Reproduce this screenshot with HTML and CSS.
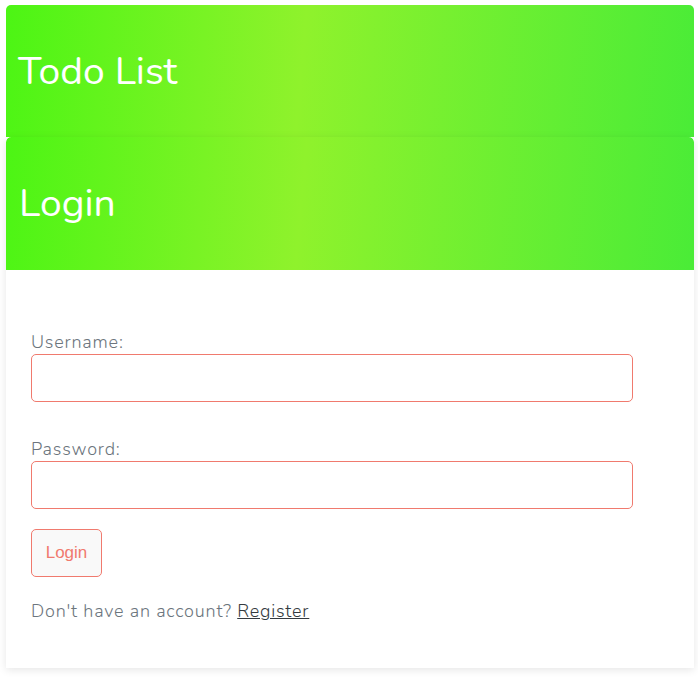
FILE: index.html
```html
<!DOCTYPE html>
<html>
<head>
<meta charset="utf-8">
<link rel="stylesheet" href="styles.css">
</head>
<body>
<div class="page">
  <header class="banner">
    <h1 class="banner-title">Todo List</h1>
  </header>
  <section class="card">
    <div class="card-header">
      <h2 class="card-title">Login</h2>
    </div>
    <div class="card-body">
      <form class="form">
        <label class="label" for="u">Username:</label>
        <input class="input" id="u" type="text">
        <label class="label label-2" for="p">Password:</label>
        <input class="input" id="p" type="password">
        <button class="btn" type="button">Login</button>
        <p class="note">Don't have an account? <a class="link" href="#">Register</a></p>
      </form>
    </div>
  </section>
</div>
</body>
</html>
```

FILE: styles.css
```css
html, body {
  margin: 0;
  padding: 0;
  background: #ffffff;
}
body {
  font-family: "Nunito", "Lato", "Open Sans", sans-serif;
}
.page {
  padding: 5px 4px 0 6px;
}
.banner, .card-header {
  background: linear-gradient(95deg, #4cf514 0%, #8ff22c 43%, #4aec37 100%);
  color: #ffffff;
  height: 132px;
  display: flex;
  align-items: center;
  padding: 0 12px;
  box-sizing: border-box;
}
.banner {
  border-radius: 5px 5px 0 0;
}
.banner-title, .card-title {
  margin: 0;
  font-weight: 400;
  font-size: 39px;
  line-height: 1;
}
.card {
  border-radius: 5px 5px 0 0;
  overflow: hidden;
  background: #fff;
  box-shadow: 0 2px 8px rgba(0,0,0,0.1);
  margin-bottom: 9px;
}
.card-header {
  height: 133px;
  border-radius: 5px 5px 0 0;
  padding-left: 13px;
}
.card-body {
  padding: 60px 26px 45px 25px;
}
.form {
  display: flex;
  flex-direction: column;
  align-items: flex-start;
}
.label {
  font-size: 18px;
  font-weight: 300;
  color: #6c757d;
  line-height: 24px;
  letter-spacing: 0.8px;
  margin-bottom: 0;
}
.label-2 {
  margin-top: 35px;
}
.input {
  width: 602px;
  height: 48px;
  box-sizing: border-box;
  border: 1px solid #f07a6e;
  border-radius: 5px;
  background: #fff;
  margin: 0;
  font-size: 16px;
}
.btn {
  margin-top: 20px;
  width: 71px;
  height: 48px;
  box-sizing: border-box;
  border: 1px solid #f07a6e;
  border-radius: 5px;
  background: #f9f9f9;
  color: #f07a6e;
  font-family: "Liberation Sans", Arial, sans-serif;
  font-size: 17px;
  padding: 0;
}
.note {
  margin: 22px 0 0 0;
  font-size: 18px;
  font-weight: 300;
  color: #6c757d;
  line-height: 24px;
  letter-spacing: 0.8px;
}
.link {
  color: #343a40;
}
```
